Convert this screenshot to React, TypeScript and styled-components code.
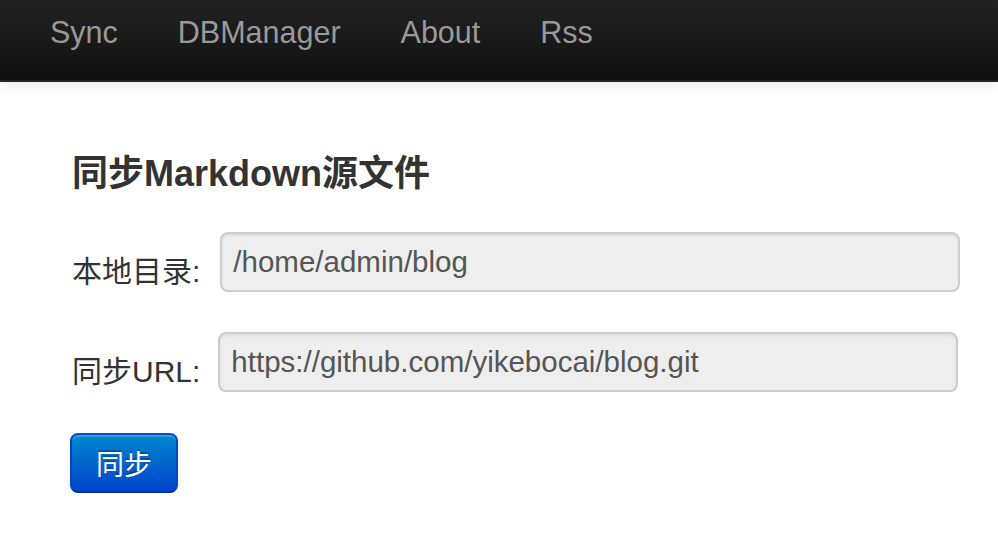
import styled, { createGlobalStyle } from 'styled-components';

const GlobalStyle = createGlobalStyle`
  html, body {
    margin: 0;
    padding: 0;
    background: #fff;
  }
  body {
    font-family: "Liberation Sans", Arial, "Noto Sans CJK SC", sans-serif;
    color: #333;
  }
`;

const Navbar = styled.nav`
  height: 80px;
  background: linear-gradient(to bottom, #222222, #111111);
  border-bottom: 2px solid #252525;
  box-shadow: 0 2px 14px rgba(0, 0, 0, 0.1);
  display: flex;
  align-items: center;
  padding-left: 20px;
`;

const NavLink = styled.a`
  display: block;
  padding: 0 30px;
  font-size: 30.5px;
  line-height: 80px;
  color: #999999;
  text-decoration: none;
  cursor: pointer;
  margin-top: -16px;
`;

const Main = styled.main`
  padding: 67px 0 0 72px;
`;

const Title = styled.h4`
  margin: 0 0 33px;
  font-size: 36px;
  line-height: 50px;
  font-weight: bold;
  color: #333;
`;

const Row = styled.div`
  display: flex;
  align-items: center;
  height: 60px;
  margin-bottom: 40px;
`;

const Label = styled.label<{ $gap: number }>`
  font-size: 30px;
  line-height: 40px;
  color: #333;
  padding-top: 20px;
  margin-right: ${(p) => p.$gap}px;
  white-space: nowrap;
`;

const Field = styled.div`
  box-sizing: border-box;
  width: 740px;
  height: 60px;
  padding: 0 11px;
  display: flex;
  align-items: center;
  background: #eeeeee;
  border: 2px solid #cccccc;
  border-radius: 8px;
  box-shadow: inset 0 2px 2px rgba(0, 0, 0, 0.075);
  font-size: 29.5px;
  color: #555555;
  white-space: nowrap;
  overflow: hidden;
`;

const Button = styled.button`
  box-sizing: border-box;
  width: 108px;
  height: 60px;
  margin-left: -2px;
  margin-top: 1px;
  border: 2px solid #0044cc;
  border-color: #0055cc #0044cc #003399;
  border-radius: 8px;
  background: linear-gradient(to bottom, #0088cc, #0044cc);
  box-shadow: inset 0 2px 0 rgba(255, 255, 255, 0.2), 0 2px 4px rgba(0, 0, 0, 0.05);
  color: #fff;
  font-family: "Noto Sans CJK SC", sans-serif;
  font-size: 28px;
  text-shadow: 0 -2px 0 rgba(0, 0, 0, 0.25);
  cursor: pointer;
`;

const App = () => {
  return (
    <>
      <GlobalStyle />
      <Navbar>
        <NavLink>Sync</NavLink>
        <NavLink>DBManager</NavLink>
        <NavLink>About</NavLink>
        <NavLink>Rss</NavLink>
      </Navbar>
      <Main>
        <Title>同步Markdown源文件</Title>
        <Row>
          <Label $gap={20}>本地目录:</Label>
          <Field>/home/admin/blog</Field>
        </Row>
        <Row>
          <Label $gap={18}>同步URL:</Label>
          <Field>https://github.com/yikebocai/blog.git</Field>
        </Row>
        <Button>同步</Button>
      </Main>
    </>
  );
};

export default App;
